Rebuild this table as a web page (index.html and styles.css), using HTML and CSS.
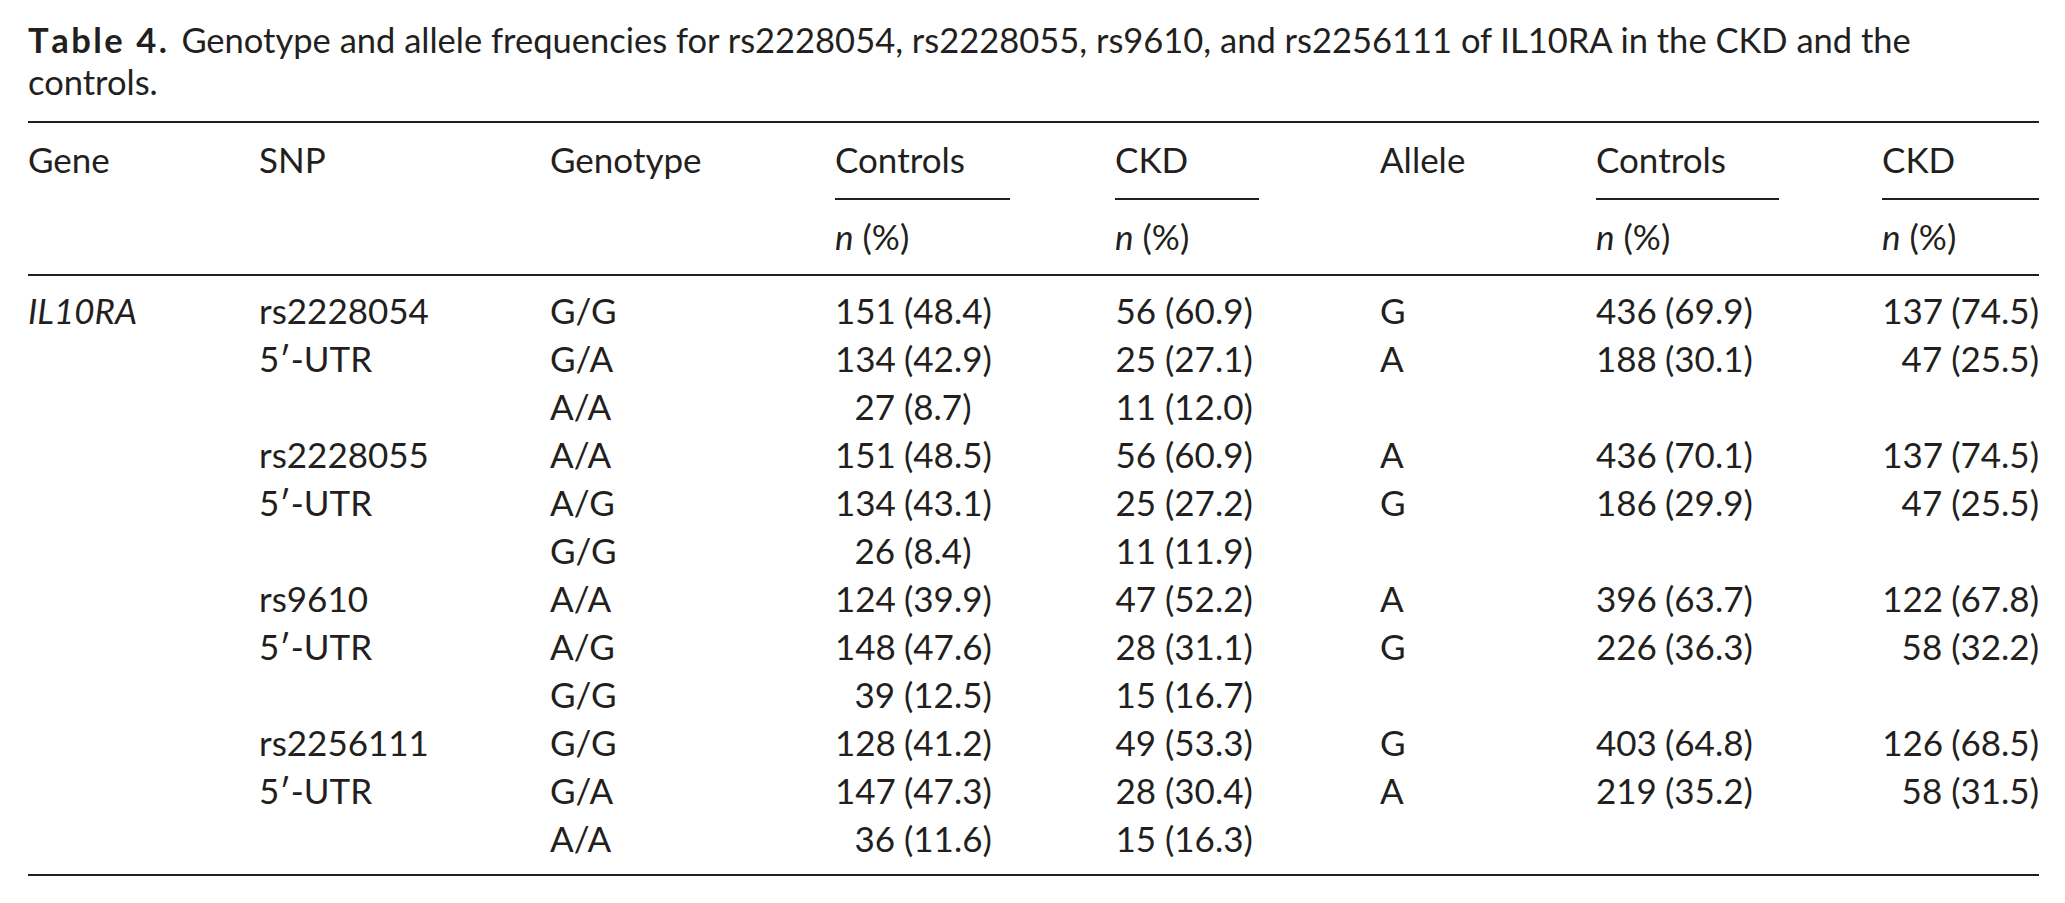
FILE: index.html
```html
<!DOCTYPE html>
<html lang="en">
<head>
<meta charset="utf-8">
<title>Table 4</title>
<link rel="stylesheet" href="styles.css">
</head>
<body>
<div class="page">
  <p class="caption"><b class="label">Table 4.</b><span class="ctext">Genotype and allele frequencies for rs2228054, rs2228055, rs9610, and rs2256111 of IL10RA in the CKD and the</span><br><span class="ctext">controls.</span></p>
  <div class="table">
    <div class="head">
      <div class="h">Gene</div>
      <div class="h">SNP</div>
      <div class="h">Genotype</div>
      <div class="h"><span class="grp g1">Controls</span></div>
      <div class="h"><span class="grp g2">CKD</span></div>
      <div class="h">Allele</div>
      <div class="h"><span class="grp g3">Controls</span></div>
      <div class="h"><span class="grp g4">CKD</span></div>
      <div class="h2"></div>
      <div class="h2"></div>
      <div class="h2"></div>
      <div class="h2"><i>n</i> (%)</div>
      <div class="h2"><i>n</i> (%)</div>
      <div class="h2"></div>
      <div class="h2"><i>n</i> (%)</div>
      <div class="h2"><i>n</i> (%)</div>
    </div>
    <div class="body">
      <div><i>IL10RA</i></div><div>rs2228054</div><div>G/G</div>
      <div class="c1"><span class="num">151</span> (48.4)</div><div class="c2"><span class="num">56</span> (60.9)</div>
      <div>G</div><div class="c3"><span class="num">436</span> (69.9)</div><div class="c4"><span class="num">137</span> (74.5)</div>

      <div></div><div>5′-UTR</div><div>G/A</div>
      <div class="c1"><span class="num">134</span> (42.9)</div><div class="c2"><span class="num">25</span> (27.1)</div>
      <div>A</div><div class="c3"><span class="num">188</span> (30.1)</div><div class="c4"><span class="num">47</span> (25.5)</div>

      <div></div><div></div><div>A/A</div>
      <div class="c1"><span class="num">27</span> (8.7)</div><div class="c2"><span class="num">11</span> (12.0)</div>
      <div></div><div></div><div></div>

      <div></div><div>rs2228055</div><div>A/A</div>
      <div class="c1"><span class="num">151</span> (48.5)</div><div class="c2"><span class="num">56</span> (60.9)</div>
      <div>A</div><div class="c3"><span class="num">436</span> (70.1)</div><div class="c4"><span class="num">137</span> (74.5)</div>

      <div></div><div>5′-UTR</div><div>A/G</div>
      <div class="c1"><span class="num">134</span> (43.1)</div><div class="c2"><span class="num">25</span> (27.2)</div>
      <div>G</div><div class="c3"><span class="num">186</span> (29.9)</div><div class="c4"><span class="num">47</span> (25.5)</div>

      <div></div><div></div><div>G/G</div>
      <div class="c1"><span class="num">26</span> (8.4)</div><div class="c2"><span class="num">11</span> (11.9)</div>
      <div></div><div></div><div></div>

      <div></div><div>rs9610</div><div>A/A</div>
      <div class="c1"><span class="num">124</span> (39.9)</div><div class="c2"><span class="num">47</span> (52.2)</div>
      <div>A</div><div class="c3"><span class="num">396</span> (63.7)</div><div class="c4"><span class="num">122</span> (67.8)</div>

      <div></div><div>5′-UTR</div><div>A/G</div>
      <div class="c1"><span class="num">148</span> (47.6)</div><div class="c2"><span class="num">28</span> (31.1)</div>
      <div>G</div><div class="c3"><span class="num">226</span> (36.3)</div><div class="c4"><span class="num">58</span> (32.2)</div>

      <div></div><div></div><div>G/G</div>
      <div class="c1"><span class="num">39</span> (12.5)</div><div class="c2"><span class="num">15</span> (16.7)</div>
      <div></div><div></div><div></div>

      <div></div><div>rs2256111</div><div>G/G</div>
      <div class="c1"><span class="num">128</span> (41.2)</div><div class="c2"><span class="num">49</span> (53.3)</div>
      <div>G</div><div class="c3"><span class="num">403</span> (64.8)</div><div class="c4"><span class="num">126</span> (68.5)</div>

      <div></div><div>5′-UTR</div><div>G/A</div>
      <div class="c1"><span class="num">147</span> (47.3)</div><div class="c2"><span class="num">28</span> (30.4)</div>
      <div>A</div><div class="c3"><span class="num">219</span> (35.2)</div><div class="c4"><span class="num">58</span> (31.5)</div>

      <div></div><div></div><div>A/A</div>
      <div class="c1"><span class="num">36</span> (11.6)</div><div class="c2"><span class="num">15</span> (16.3)</div>
      <div></div><div></div><div></div>
    </div>
  </div>
</div>
</body>
</html>
```

FILE: styles.css
```css
html, body {
  margin: 0;
  padding: 0;
  background: #ffffff;
}
body {
  font-family: Lato, "Open Sans", sans-serif;
  font-size: 35px;
  color: #231f20;
}
.page {
  padding: 19px 26px 0 28px;
}
.caption {
  margin: 0 0 18px 0;
  font-size: 34.5px;
  line-height: 42px;
  white-space: nowrap;
}
.label {
  font-weight: 700;
  font-kerning: none;
  letter-spacing: 2.5px;
  margin-right: 12px;
}
.table {
  border-top: 2px solid #231f20;
  border-bottom: 2px solid #231f20;
}
.head, .body {
  display: grid;
  grid-template-columns: 231px 291px 285px 280px 265px 216px 286px 157px;
  line-height: 48px;
}
.head {
  border-bottom: 2px solid #231f20;
  padding: 12px 0 14px 0;
}
.h {
  padding-bottom: 17px;
}
.grp {
  display: block;
  border-bottom: 2px solid #231f20;
  padding-bottom: 15px;
  margin-bottom: -17px;
}
.g1 { width: 175px; }
.g2 { width: 144px; }
.g3 { width: 183px; }
.g4 { width: 157px; }
.h2 {
  padding-top: 12px;
}
.body {
  padding: 10px 0 12px 0;
}
.num {
  display: inline-block;
  text-align: right;
}
.c1 .num { width: 60px; }
.c2 .num { width: 41px; }
.c3 .num { width: 60px; }
.c4 .num { width: 60px; }
.c4 { justify-self: end; }
```
